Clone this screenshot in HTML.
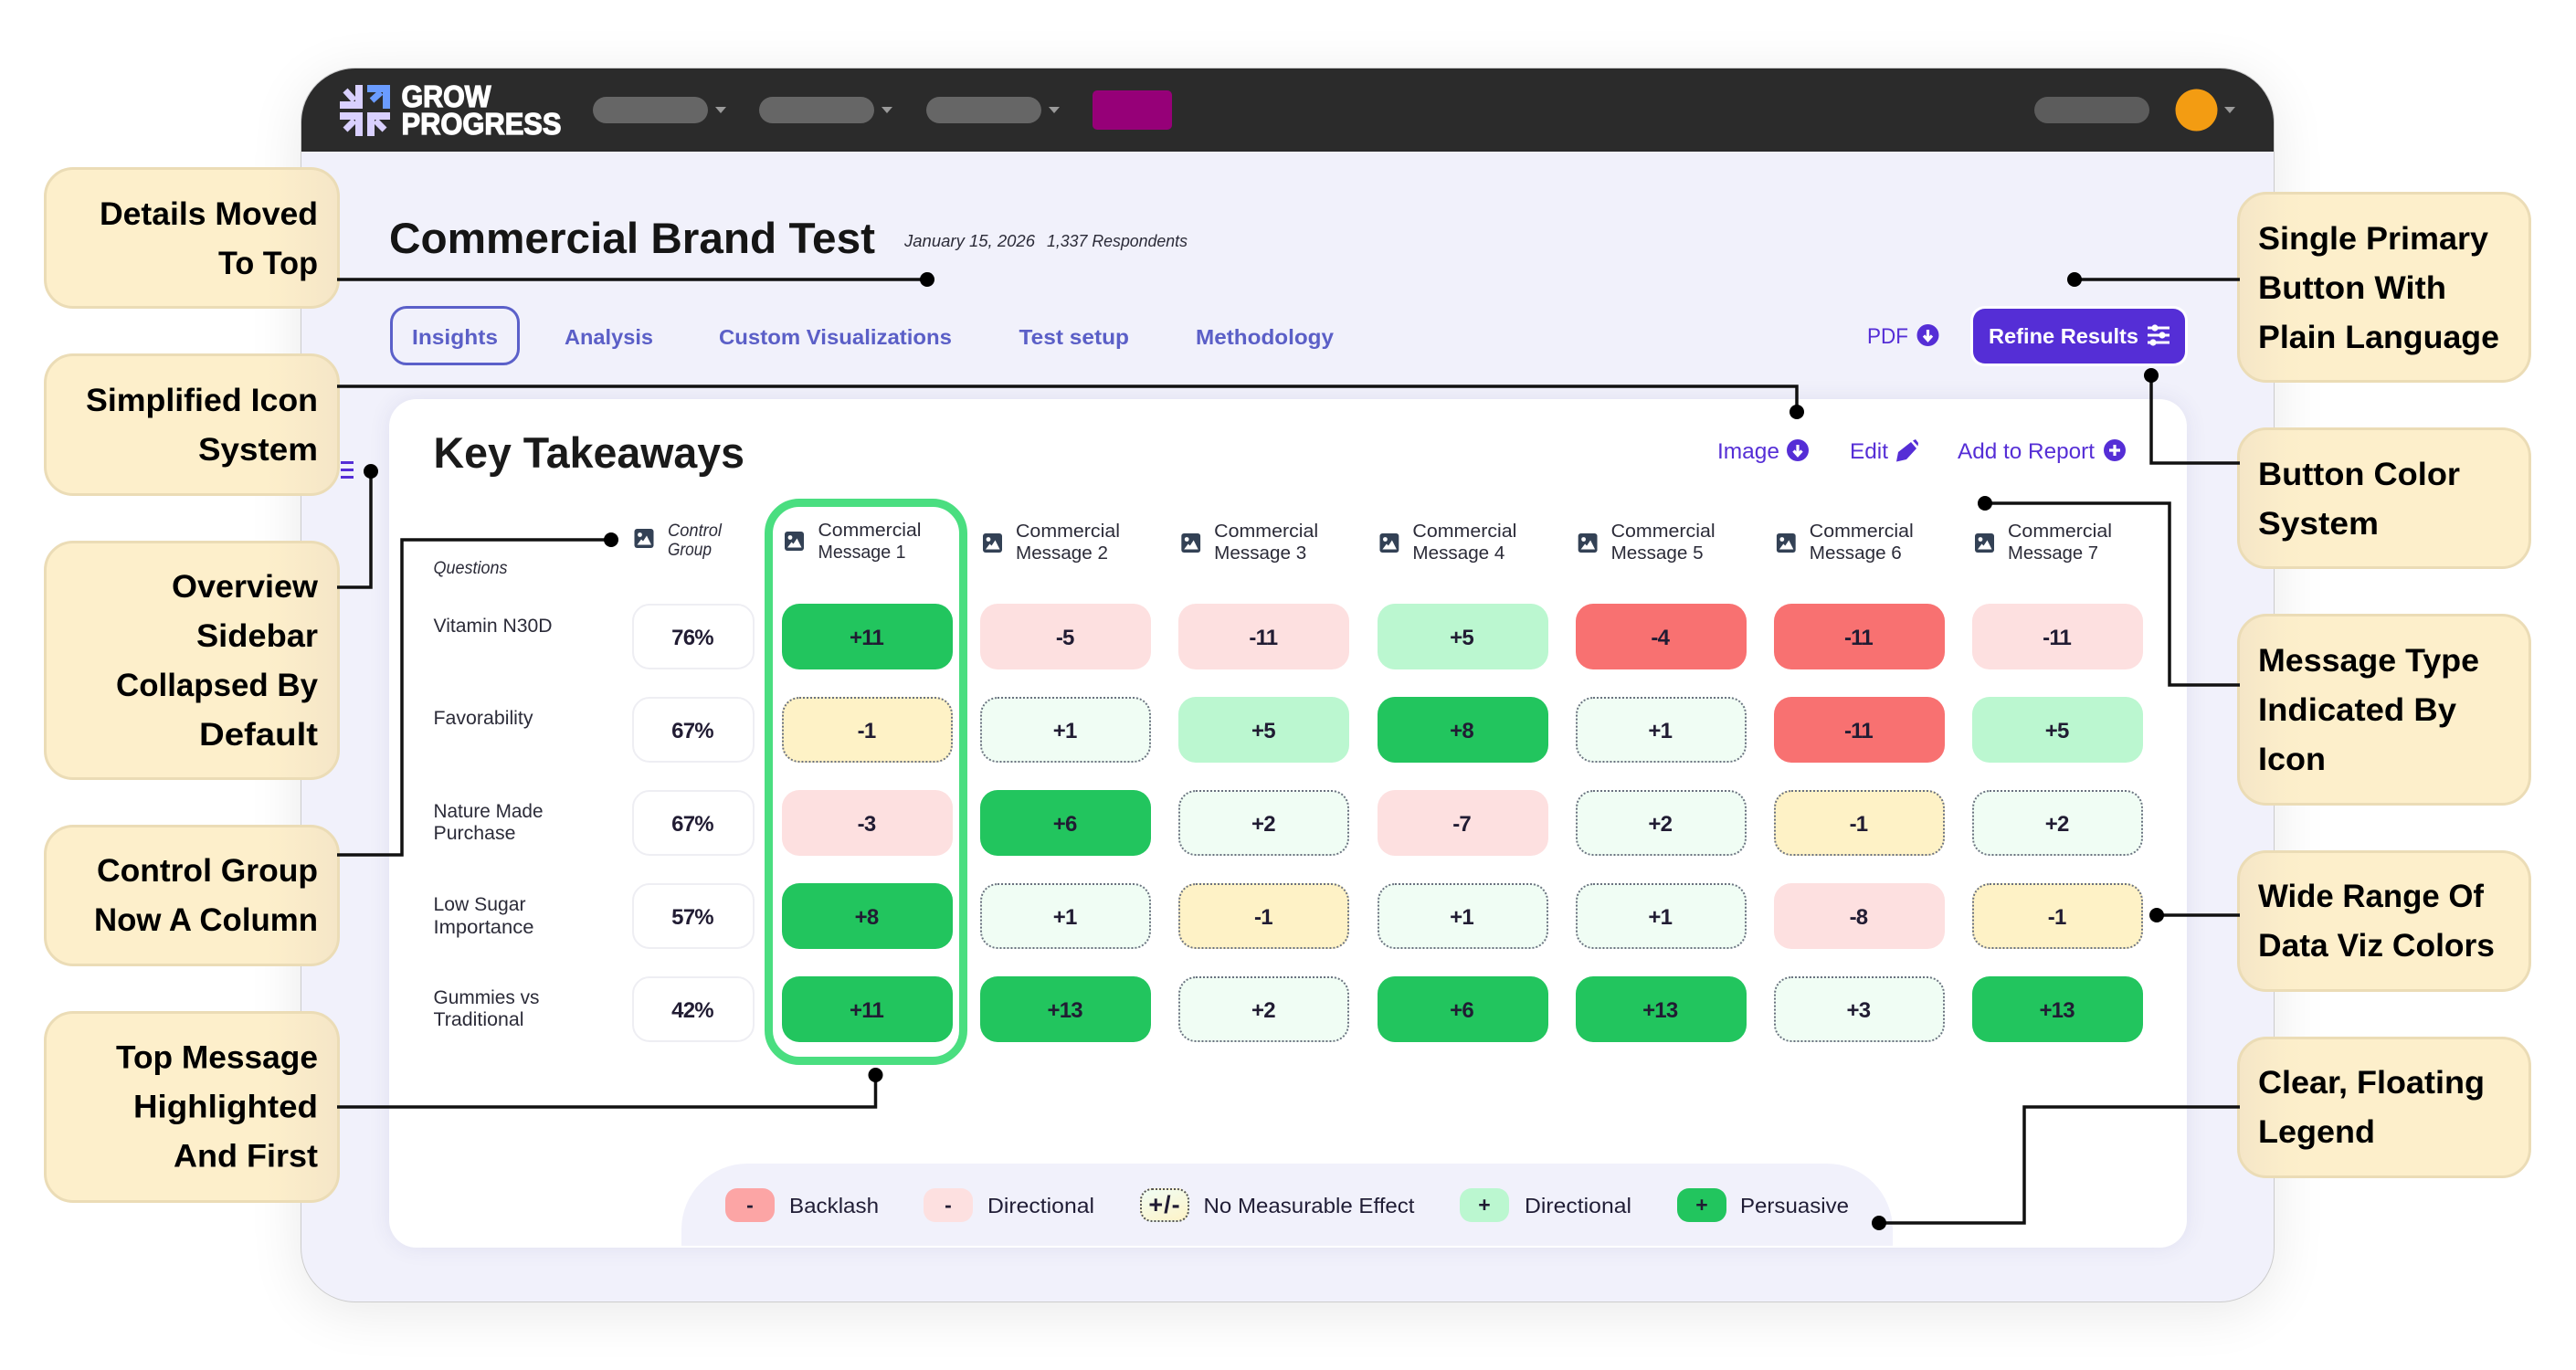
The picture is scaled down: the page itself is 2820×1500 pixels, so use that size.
<!DOCTYPE html>
<html lang="en">
<head>
<meta charset="utf-8">
<title>Commercial Brand Test annotated</title>
<style>
html,body{margin:0;padding:0;background:#fff}
#p{position:relative;width:2820px;height:1500px;overflow:hidden;background:#fff;font-family:"Liberation Sans",sans-serif}
#p>div{position:absolute;box-sizing:border-box}
.win{left:329px;top:74px;width:2161px;height:1352px;background:#f1f1fb;border-radius:60px;border:1.5px solid #ccc;box-shadow:0 10px 60px rgba(0,0,0,.09);overflow:hidden}
.hdr{position:absolute;left:-2px;top:-2px;right:-2px;height:92.5px;background:#2b2b2b}
.card{left:426px;top:437px;width:1968px;height:929px;background:#fff;border-radius:30px;box-shadow:0 0 24px rgba(60,60,130,.09)}
.leg{left:746px;top:1274px;width:1326px;height:90px;background:#f1f1fb;border-radius:72px 72px 0 0}
.tab{left:427px;top:335px;width:142px;height:65px;border:3px solid #5b60c9;border-radius:18px}
.btn{left:2160px;top:338px;width:232px;height:60px;background:#552ed6;border-radius:13px;box-shadow:0 0 0 3px #fff}
.hl{left:837px;top:546px;width:222px;height:620px;border:9px solid #4ade80;border-radius:38px}
.grid{display:grid;grid-template-columns:repeat(7,187px);column-gap:30.2px;grid-auto-rows:72px;row-gap:30px;left:856px;top:661px;width:1490px}
.ctl{display:grid;grid-auto-rows:72px;row-gap:30px;left:692px;top:661px;width:134px}
.v{box-sizing:border-box;display:flex;align-items:center;justify-content:center;border-radius:19px;padding:4px 2px 0 0;font-weight:700;font-size:24px;letter-spacing:-.8px;color:#211c33}
.cv{background:#fff;border:2px solid #eeeef3}
.G{background:#22c55e}.L{background:#bbf7d0}.N{background:#f0fdf4;border:2px dotted #6b7280}.Y{background:#fef2c6;border:2px dotted #6b7280}.P{background:#fde0e0}.R{background:#f87171}
.pill{top:1301px;height:37px;width:54px;border-radius:13px;display:flex;align-items:center;justify-content:center;font-weight:700;font-size:23px;color:#211c33}
.cl{left:48px;width:324px;border:3px solid #ebdcb6;border-radius:32px;background:linear-gradient(90deg,#fdefcb 0,#fdefcb 76%,#f5e6c7 100%)}
.cr{left:2449px;width:322px;border:3px solid #ebdcb6;border-radius:32px;background:linear-gradient(90deg,#f5e6c7 0,#fbedca 14%,#fdefcb 22%)}
svg{position:absolute;left:0;top:0}
.c{font:700 35px "Liberation Sans",sans-serif;fill:#000}
.t{font:700 23px "Liberation Sans",sans-serif;fill:#5b5fc7}
.a{font:400 24px "Liberation Sans",sans-serif;fill:#552ed6}
.h{font:400 20px "Liberation Sans",sans-serif;fill:#2b2b38}
.i{font:italic 400 19px "Liberation Sans",sans-serif;fill:#2b2b38}
.q{font:400 21px "Liberation Sans",sans-serif;fill:#2b2b38}
.l{font:400 23px "Liberation Sans",sans-serif;fill:#201d35}
.ln{fill:none;stroke:#111;stroke-width:3.5}
</style>
</head>
<body>
<div id="p">
  <div class="win"><div class="hdr"></div></div>
  <div class="tab"></div>
  <div class="btn"></div>
  <div class="card"></div>
  <div class="leg"></div>
  <div class="hl"></div>

  <div class="ctl">
    <div class="v cv">76%</div><div class="v cv">67%</div><div class="v cv">67%</div><div class="v cv">57%</div><div class="v cv">42%</div>
  </div>
  <div class="grid">
    <div class="v G">+11</div><div class="v P">-5</div><div class="v P">-11</div><div class="v L">+5</div><div class="v R">-4</div><div class="v R">-11</div><div class="v P">-11</div>
    <div class="v Y">-1</div><div class="v N">+1</div><div class="v L">+5</div><div class="v G">+8</div><div class="v N">+1</div><div class="v R">-11</div><div class="v L">+5</div>
    <div class="v P">-3</div><div class="v G">+6</div><div class="v N">+2</div><div class="v P">-7</div><div class="v N">+2</div><div class="v Y">-1</div><div class="v N">+2</div>
    <div class="v G">+8</div><div class="v N">+1</div><div class="v Y">-1</div><div class="v N">+1</div><div class="v N">+1</div><div class="v P">-8</div><div class="v Y">-1</div>
    <div class="v G">+11</div><div class="v G">+13</div><div class="v N">+2</div><div class="v G">+6</div><div class="v G">+13</div><div class="v N">+3</div><div class="v G">+13</div>
  </div>

  <div class="pill" style="left:794px;background:#fca5a5">-</div>
  <div class="pill" style="left:1011px;background:#fde0e0">-</div>
  <div class="pill" style="left:1248px;background:linear-gradient(160deg,#f0fdf4,#fef3c7);border:2px dotted #555;box-sizing:border-box;font-size:27px;letter-spacing:1px">+/-</div>
  <div class="pill" style="left:1598px;background:#bbf7d0">+</div>
  <div class="pill" style="left:1836px;background:#22c55e">+</div>

  <div class="cl" style="top:183px;height:155px"></div>
  <div class="cl" style="top:387px;height:156px"></div>
  <div class="cl" style="top:592px;height:262px"></div>
  <div class="cl" style="top:903px;height:155px"></div>
  <div class="cl" style="top:1107px;height:210px"></div>
  <div class="cr" style="top:210px;height:209px"></div>
  <div class="cr" style="top:468px;height:155px"></div>
  <div class="cr" style="top:672px;height:210px"></div>
  <div class="cr" style="top:931px;height:155px"></div>
  <div class="cr" style="top:1135px;height:155px"></div>

  <svg width="2820" height="1500" viewBox="0 0 2820 1500" xmlns="http://www.w3.org/2000/svg">
    <defs>
      <symbol id="img" viewBox="0 0 21 21">
        <rect width="21" height="21" rx="3" fill="#334155"/>
        <circle cx="6" cy="6.5" r="2.4" fill="#fff"/>
        <path d="M3 17.5 L7.5 11.5 L9.5 13.5 L13.5 7.5 L18.5 17.5 Z" fill="#fff"/>
      </symbol>
    </defs>

    <!-- logo -->
    <g fill="#d9d0ff">
      <path d="M389 93h8v26h-25v-8h17z"/>
      <path d="M372 123h25v26h-8v-18h-17z"/>
      <path d="M402 123h25v8h-17v18h-8z"/>
    </g>
    <path d="M402 93h25v26h-8v-18h-17z" fill="#6a9cff"/>
    <g stroke="#d9d0ff" stroke-width="7" fill="none">
      <path d="M378 99L388 110"/>
      <path d="M378 142L388 132"/>
      <path d="M421 142L411 132"/>
    </g>
    <path d="M407 110L417 101" stroke="#6a9cff" stroke-width="7" fill="none"/>
    <g font-family="Liberation Sans" font-weight="700" font-size="33" fill="#fff" stroke="#fff" stroke-width="1.3">
      <text x="439.5" y="117" textLength="98" lengthAdjust="spacingAndGlyphs">GROW</text>
      <text x="439.5" y="147" textLength="175" lengthAdjust="spacingAndGlyphs">PROGRESS</text>
    </g>

    <!-- header controls -->
    <g fill="#666">
      <rect x="649" y="106" width="126" height="29" rx="14.5"/>
      <rect x="831" y="106" width="126" height="29" rx="14.5"/>
      <rect x="1014" y="106" width="126" height="29" rx="14.5"/>
    </g>
    <rect x="2227" y="106" width="126" height="29" rx="14.5" fill="#5c5c5c"/>
    <g fill="#9a9a9a">
      <path d="M783 117h12l-6 7z"/><path d="M965 117h12l-6 7z"/><path d="M1148 117h12l-6 7z"/><path d="M2435 117h12l-6 7z"/>
    </g>
    <rect x="1196" y="99" width="87" height="43" rx="5" fill="#960078"/>
    <circle cx="2404.5" cy="120.5" r="23" fill="#f39c12"/>

    <!-- title -->
    <text x="426" y="277" textLength="532" lengthAdjust="spacingAndGlyphs" font-family="Liberation Sans" font-weight="700" font-size="47" fill="#151515">Commercial Brand Test</text>
    <text x="990" y="270" textLength="143" lengthAdjust="spacingAndGlyphs" class="i" style="font-size:18px">January 15, 2026</text>
    <text x="1146" y="270" textLength="154" lengthAdjust="spacingAndGlyphs" class="i" style="font-size:18px">1,337 Respondents</text>

    <!-- tabs -->
    <text class="t" x="451" y="377" textLength="94" lengthAdjust="spacingAndGlyphs">Insights</text>
    <text class="t" x="618" y="377" textLength="97" lengthAdjust="spacingAndGlyphs">Analysis</text>
    <text class="t" x="787" y="377" textLength="255" lengthAdjust="spacingAndGlyphs">Custom Visualizations</text>
    <text class="t" x="1115.5" y="377" textLength="120.5" lengthAdjust="spacingAndGlyphs">Test setup</text>
    <text class="t" x="1309" y="377" textLength="151" lengthAdjust="spacingAndGlyphs">Methodology</text>

    <!-- PDF and button -->
    <text class="a" x="2044" y="376" textLength="45" lengthAdjust="spacingAndGlyphs">PDF</text>
    <g transform="translate(2110.5 367)"><circle r="12" fill="#552ed6"/><path d="M0-6V5M-4.5 0.5L0 5.5L4.5 0.5" fill="none" stroke="#fff" stroke-width="3.2"/></g>
    <text x="2177" y="376" textLength="164" lengthAdjust="spacingAndGlyphs" font-family="Liberation Sans" font-weight="700" font-size="23" fill="#fff">Refine Results</text>
    <g stroke="#fff" stroke-width="3"><path d="M2351 359h24M2351 367h24M2351 375h24"/></g>
    <g fill="#fff"><circle cx="2359" cy="359" r="3.6"/><circle cx="2367" cy="367" r="3.6"/><circle cx="2357" cy="375" r="3.6"/></g>

    <!-- sidebar icon -->
    <path d="M373 506.5h14M373 514.5h14M373 522.5h14" stroke="#552ed6" stroke-width="3" fill="none"/>

    <!-- card heading and actions -->
    <text x="474.5" y="512" textLength="340.5" lengthAdjust="spacingAndGlyphs" font-family="Liberation Sans" font-weight="700" font-size="47" fill="#1a1a1a">Key Takeaways</text>
    <text class="a" x="1880" y="502" textLength="68" lengthAdjust="spacingAndGlyphs">Image</text>
    <g transform="translate(1968 493)"><circle r="12" fill="#552ed6"/><path d="M0-6V5M-4.5 0.5L0 5.5L4.5 0.5" fill="none" stroke="#fff" stroke-width="3.2"/></g>
    <text class="a" x="2025" y="502" textLength="42" lengthAdjust="spacingAndGlyphs">Edit</text>
    <path d="M2078 495L2092 484L2098 491L2087 503L2076 505.5Z" fill="#552ed6"/>
    <path d="M2094 482.5L2097 481L2100 485L2099.5 488.5Z" fill="#552ed6"/>
    <text class="a" x="2143" y="502" textLength="150" lengthAdjust="spacingAndGlyphs">Add to Report</text>
    <g transform="translate(2315 493)"><circle r="12" fill="#552ed6"/><path d="M0-6V6M-6 0H6" fill="none" stroke="#fff" stroke-width="3.2"/></g>

    <!-- column headers -->
    <use href="#img" x="694" y="579" width="22" height="21"/>
    <text class="i" x="731" y="587" textLength="59" lengthAdjust="spacingAndGlyphs">Control</text>
    <text class="i" x="731" y="608" textLength="48" lengthAdjust="spacingAndGlyphs">Group</text>

    <use href="#img" x="859" y="582" width="21" height="21"/>
    <text class="h" x="895.5" y="587" textLength="113" lengthAdjust="spacingAndGlyphs">Commercial</text>
    <text class="h" x="895.5" y="611" textLength="96" lengthAdjust="spacingAndGlyphs">Message 1</text>

    <use href="#img" x="1076" y="584" width="21" height="21"/>
    <text class="h" x="1112" y="588" textLength="114" lengthAdjust="spacingAndGlyphs">Commercial</text>
    <text class="h" x="1112" y="612" textLength="101" lengthAdjust="spacingAndGlyphs">Message 2</text>

    <use href="#img" x="1293.2" y="584" width="21" height="21"/>
    <text class="h" x="1329.2" y="588" textLength="114" lengthAdjust="spacingAndGlyphs">Commercial</text>
    <text class="h" x="1329.2" y="612" textLength="101" lengthAdjust="spacingAndGlyphs">Message 3</text>

    <use href="#img" x="1510.4" y="584" width="21" height="21"/>
    <text class="h" x="1546.4" y="588" textLength="114" lengthAdjust="spacingAndGlyphs">Commercial</text>
    <text class="h" x="1546.4" y="612" textLength="101" lengthAdjust="spacingAndGlyphs">Message 4</text>

    <use href="#img" x="1727.6" y="584" width="21" height="21"/>
    <text class="h" x="1763.6" y="588" textLength="114" lengthAdjust="spacingAndGlyphs">Commercial</text>
    <text class="h" x="1763.6" y="612" textLength="101" lengthAdjust="spacingAndGlyphs">Message 5</text>

    <use href="#img" x="1944.8" y="584" width="21" height="21"/>
    <text class="h" x="1980.8" y="588" textLength="114" lengthAdjust="spacingAndGlyphs">Commercial</text>
    <text class="h" x="1980.8" y="612" textLength="101" lengthAdjust="spacingAndGlyphs">Message 6</text>

    <use href="#img" x="2162" y="584" width="21" height="21"/>
    <text class="h" x="2198" y="588" textLength="114" lengthAdjust="spacingAndGlyphs">Commercial</text>
    <text class="h" x="2198" y="612" textLength="99" lengthAdjust="spacingAndGlyphs">Message 7</text>

    <!-- question labels -->
    <text class="i" x="474.5" y="628" textLength="81" lengthAdjust="spacingAndGlyphs">Questions</text>
    <text class="q" x="474.5" y="692" textLength="130" lengthAdjust="spacingAndGlyphs">Vitamin N30D</text>
    <text class="q" x="474.5" y="793" textLength="109" lengthAdjust="spacingAndGlyphs">Favorability</text>
    <text class="q" x="474.5" y="895" textLength="120" lengthAdjust="spacingAndGlyphs">Nature Made</text>
    <text class="q" x="474.5" y="919" textLength="90" lengthAdjust="spacingAndGlyphs">Purchase</text>
    <text class="q" x="474.5" y="997" textLength="101" lengthAdjust="spacingAndGlyphs">Low Sugar</text>
    <text class="q" x="474.5" y="1022" textLength="110" lengthAdjust="spacingAndGlyphs">Importance</text>
    <text class="q" x="474.5" y="1099" textLength="116" lengthAdjust="spacingAndGlyphs">Gummies vs</text>
    <text class="q" x="474.5" y="1123" textLength="99" lengthAdjust="spacingAndGlyphs">Traditional</text>

    <!-- legend labels -->
    <text class="l" x="864" y="1328" textLength="98" lengthAdjust="spacingAndGlyphs">Backlash</text>
    <text class="l" x="1081" y="1328" textLength="117" lengthAdjust="spacingAndGlyphs">Directional</text>
    <text class="l" x="1317.5" y="1328" textLength="231" lengthAdjust="spacingAndGlyphs">No Measurable Effect</text>
    <text class="l" x="1669" y="1328" textLength="117" lengthAdjust="spacingAndGlyphs">Directional</text>
    <text class="l" x="1905" y="1328" textLength="119" lengthAdjust="spacingAndGlyphs">Persuasive</text>

    <!-- connectors -->
    <path class="ln" d="M369 306H1015"/><circle cx="1015" cy="306" r="8" fill="#000"/>
    <path class="ln" d="M369 423H1967V451"/><circle cx="1967" cy="451" r="8" fill="#000"/>
    <path class="ln" d="M369 643H406V516"/><circle cx="406" cy="516" r="8" fill="#000"/>
    <path class="ln" d="M369 936H440V591H669"/><circle cx="669" cy="591" r="8" fill="#000"/>
    <path class="ln" d="M369 1212H958.5V1177"/><circle cx="958.5" cy="1177" r="8" fill="#000"/>
    <path class="ln" d="M2452 306H2271"/><circle cx="2271" cy="306" r="8" fill="#000"/>
    <path class="ln" d="M2452 507H2355V411"/><circle cx="2355" cy="411" r="8" fill="#000"/>
    <path class="ln" d="M2452 750H2375V551H2173"/><circle cx="2173" cy="551" r="8" fill="#000"/>
    <path class="ln" d="M2452 1002H2361"/><circle cx="2361" cy="1002" r="8" fill="#000"/>
    <path class="ln" d="M2452 1212H2216V1339H2057"/><circle cx="2057" cy="1339" r="8" fill="#000"/>

    <!-- left callouts -->
    <text class="c" x="109" y="246" textLength="239" lengthAdjust="spacingAndGlyphs">Details Moved</text>
    <text class="c" x="239" y="300" textLength="109" lengthAdjust="spacingAndGlyphs">To Top</text>
    <text class="c" x="94" y="450" textLength="254" lengthAdjust="spacingAndGlyphs">Simplified Icon</text>
    <text class="c" x="217" y="504" textLength="131" lengthAdjust="spacingAndGlyphs">System</text>
    <text class="c" x="188" y="654" textLength="160" lengthAdjust="spacingAndGlyphs">Overview</text>
    <text class="c" x="215" y="708" textLength="133" lengthAdjust="spacingAndGlyphs">Sidebar</text>
    <text class="c" x="127" y="762" textLength="221" lengthAdjust="spacingAndGlyphs">Collapsed By</text>
    <text class="c" x="218" y="816" textLength="130" lengthAdjust="spacingAndGlyphs">Default</text>
    <text class="c" x="106" y="965" textLength="242" lengthAdjust="spacingAndGlyphs">Control Group</text>
    <text class="c" x="103" y="1019" textLength="245" lengthAdjust="spacingAndGlyphs">Now A Column</text>
    <text class="c" x="127" y="1169.5" textLength="221" lengthAdjust="spacingAndGlyphs">Top Message</text>
    <text class="c" x="146" y="1223.5" textLength="202" lengthAdjust="spacingAndGlyphs">Highlighted</text>
    <text class="c" x="190" y="1277.5" textLength="158" lengthAdjust="spacingAndGlyphs">And First</text>

    <!-- right callouts -->
    <text class="c" x="2472" y="273" textLength="252" lengthAdjust="spacingAndGlyphs">Single Primary</text>
    <text class="c" x="2472" y="327" textLength="206" lengthAdjust="spacingAndGlyphs">Button With</text>
    <text class="c" x="2472" y="381" textLength="264" lengthAdjust="spacingAndGlyphs">Plain Language</text>
    <text class="c" x="2472" y="531" textLength="221" lengthAdjust="spacingAndGlyphs">Button Color</text>
    <text class="c" x="2472" y="585" textLength="132" lengthAdjust="spacingAndGlyphs">System</text>
    <text class="c" x="2472" y="735" textLength="242" lengthAdjust="spacingAndGlyphs">Message Type</text>
    <text class="c" x="2472" y="789" textLength="217" lengthAdjust="spacingAndGlyphs">Indicated By</text>
    <text class="c" x="2472" y="843" textLength="74" lengthAdjust="spacingAndGlyphs">Icon</text>
    <text class="c" x="2472" y="993" textLength="247" lengthAdjust="spacingAndGlyphs">Wide Range Of</text>
    <text class="c" x="2472" y="1047" textLength="259" lengthAdjust="spacingAndGlyphs">Data Viz Colors</text>
    <text class="c" x="2472" y="1197" textLength="248" lengthAdjust="spacingAndGlyphs">Clear, Floating</text>
    <text class="c" x="2472" y="1251" textLength="128" lengthAdjust="spacingAndGlyphs">Legend</text>
  </svg>
</div>
</body>
</html>
